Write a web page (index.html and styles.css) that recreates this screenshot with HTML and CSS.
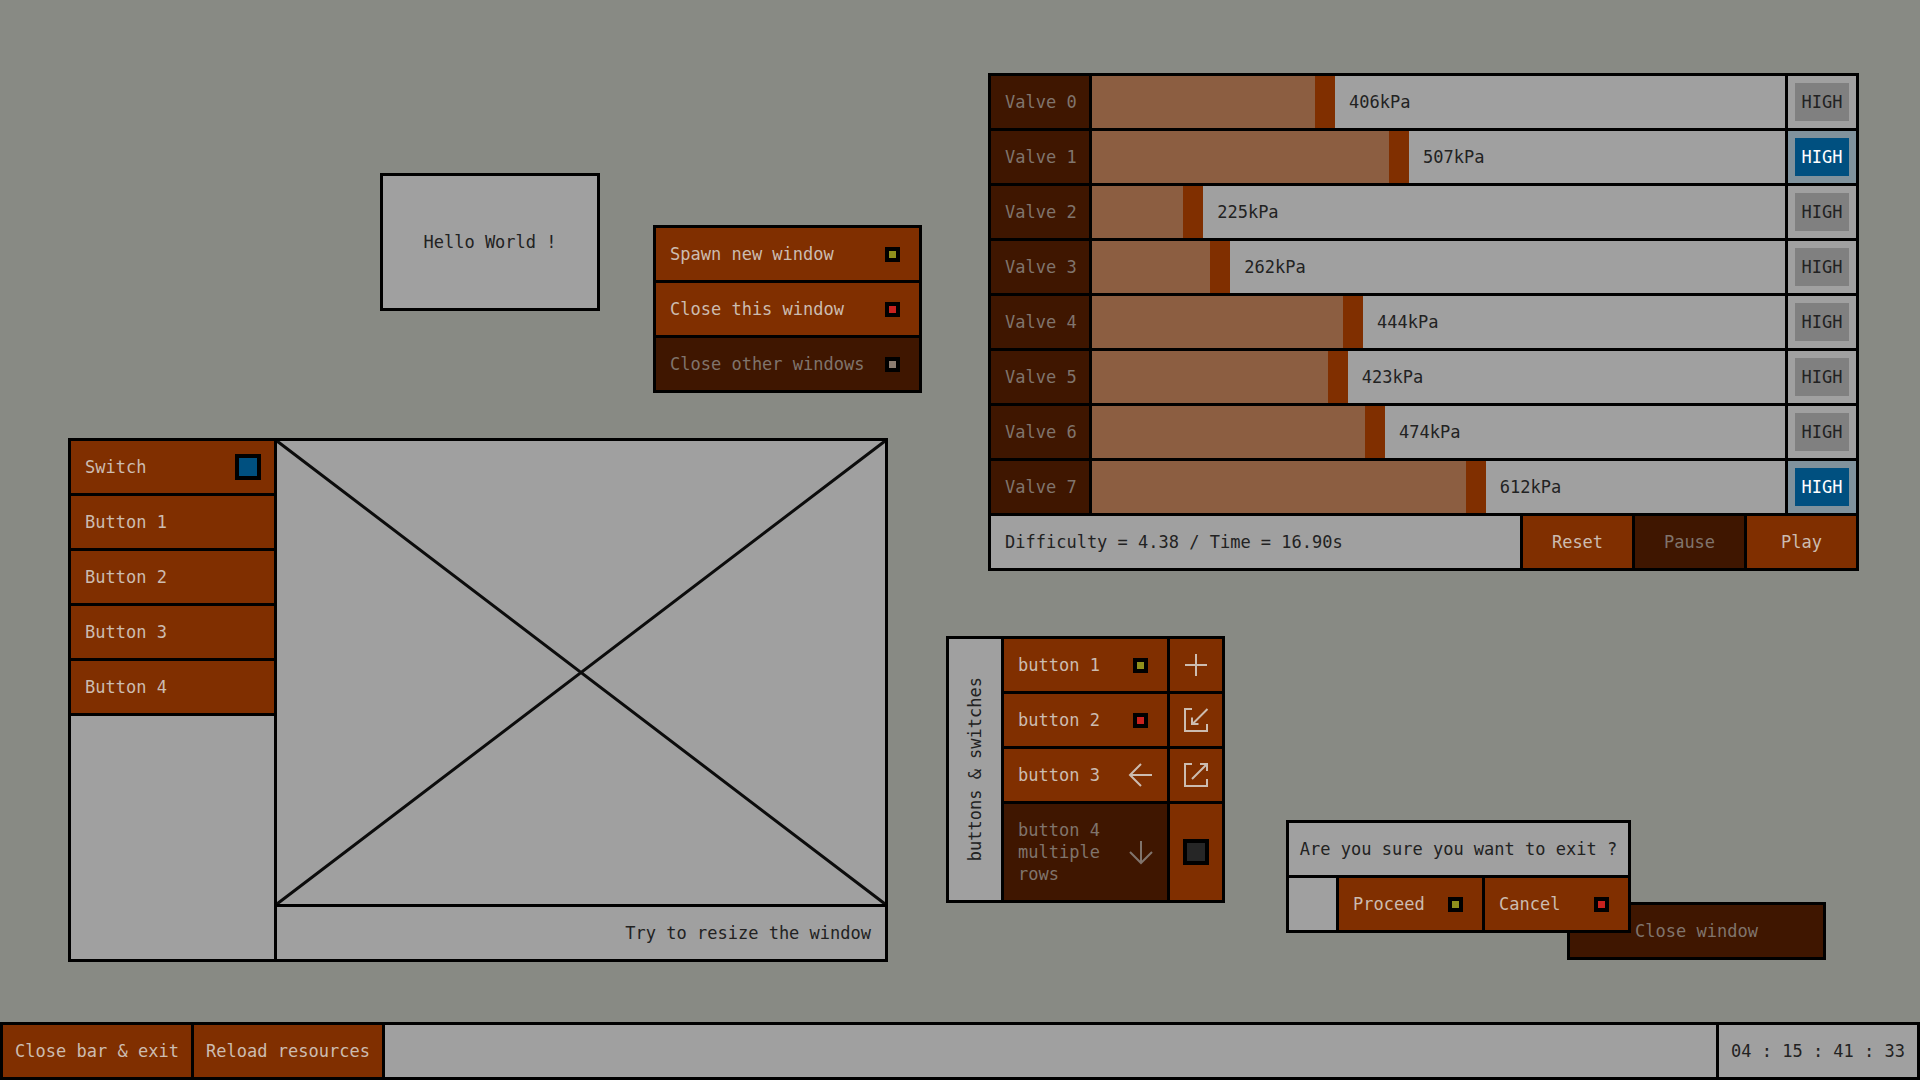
FILE: index.html
```html
<!DOCTYPE html>
<html lang="en">
<head>
<meta charset="utf-8">
<title>Desktop</title>
<link rel="stylesheet" href="styles.css">
</head>
<body>
<main class="desktop">

  <section class="window window-hello">
    <p class="cell cell-center">Hello World !</p>
  </section>

  <section class="window window-menu">
    <button class="cell btn" type="button">Spawn new window<span class="slot"><span class="led led-yellow"></span></span></button>
    <button class="cell btn" type="button">Close this window<span class="slot"><span class="led led-red"></span></span></button>
    <button class="cell btn" type="button" disabled>Close other windows<span class="slot"><span class="led led-off"></span></span></button>
  </section>

  <section class="window window-valves">
    <div class="valve">
      <label class="cell valve-name" for="v0">Valve 0</label>
      <div class="slider" style="--p:0.3315"><input id="v0" type="range" min="100" max="1022" value="406"><output for="v0">406kPa</output></div>
      <div class="cell flag"><button class="high" type="button" aria-pressed="false">HIGH</button></div>
    </div>
    <div class="valve">
      <label class="cell valve-name" for="v1">Valve 1</label>
      <div class="slider" style="--p:0.4414"><input id="v1" type="range" min="100" max="1022" value="507"><output for="v1">507kPa</output></div>
      <div class="cell flag flag-on"><button class="high" type="button" aria-pressed="true">HIGH</button></div>
    </div>
    <div class="valve">
      <label class="cell valve-name" for="v2">Valve 2</label>
      <div class="slider" style="--p:0.1355"><input id="v2" type="range" min="100" max="1022" value="225"><output for="v2">225kPa</output></div>
      <div class="cell flag"><button class="high" type="button" aria-pressed="false">HIGH</button></div>
    </div>
    <div class="valve">
      <label class="cell valve-name" for="v3">Valve 3</label>
      <div class="slider" style="--p:0.1757"><input id="v3" type="range" min="100" max="1022" value="262"><output for="v3">262kPa</output></div>
      <div class="cell flag"><button class="high" type="button" aria-pressed="false">HIGH</button></div>
    </div>
    <div class="valve">
      <label class="cell valve-name" for="v4">Valve 4</label>
      <div class="slider" style="--p:0.3731"><input id="v4" type="range" min="100" max="1022" value="444"><output for="v4">444kPa</output></div>
      <div class="cell flag"><button class="high" type="button" aria-pressed="false">HIGH</button></div>
    </div>
    <div class="valve">
      <label class="cell valve-name" for="v5">Valve 5</label>
      <div class="slider" style="--p:0.3503"><input id="v5" type="range" min="100" max="1022" value="423"><output for="v5">423kPa</output></div>
      <div class="cell flag"><button class="high" type="button" aria-pressed="false">HIGH</button></div>
    </div>
    <div class="valve">
      <label class="cell valve-name" for="v6">Valve 6</label>
      <div class="slider" style="--p:0.4056"><input id="v6" type="range" min="100" max="1022" value="474"><output for="v6">474kPa</output></div>
      <div class="cell flag"><button class="high" type="button" aria-pressed="false">HIGH</button></div>
    </div>
    <div class="valve">
      <label class="cell valve-name" for="v7">Valve 7</label>
      <div class="slider" style="--p:0.5553"><input id="v7" type="range" min="100" max="1022" value="612"><output for="v7">612kPa</output></div>
      <div class="cell flag flag-on"><button class="high" type="button" aria-pressed="true">HIGH</button></div>
    </div>
    <div class="controls">
      <p class="cell">Difficulty = 4.38 / Time = 16.90s</p>
      <button class="cell btn cell-center" type="button">Reset</button>
      <button class="cell btn cell-center" type="button" disabled>Pause</button>
      <button class="cell btn cell-center" type="button">Play</button>
    </div>
  </section>

  <section class="window window-layout">
    <div class="sidebar">
      <label class="cell btn" for="side-switch">Switch<input class="switch" id="side-switch" type="checkbox" checked></label>
      <button class="cell btn" type="button">Button 1</button>
      <button class="cell btn" type="button">Button 2</button>
      <button class="cell btn" type="button">Button 3</button>
      <button class="cell btn" type="button">Button 4</button>
      <div class="filler"></div>
    </div>
    <div class="content">
      <svg class="cross" viewBox="0 0 100 100" preserveAspectRatio="none" aria-hidden="true"><path d="M0 0L100 100M0 100L100 0"/></svg>
      <p class="cell cell-end">Try to resize the window</p>
    </div>
  </section>

  <section class="window window-buttons">
    <h2 class="cell side-title"><span>buttons &amp; switches</span></h2>
    <div class="button-grid">
      <button class="cell btn" type="button">button 1<span class="slot"><span class="led led-yellow"></span></span></button>
      <button class="cell btn icon-only" type="button" aria-label="Add"><svg class="icon" viewBox="0 0 26 26"><path d="M13 2V24M2 13H24"/></svg></button>
      <button class="cell btn" type="button">button 2<span class="slot"><span class="led led-red"></span></span></button>
      <button class="cell btn icon-only" type="button" aria-label="Import"><svg class="icon" viewBox="0 0 26 26"><path d="M9 2H2V24H24V17M24.500 2L9.500 17M9 10.500V17H15.500"/></svg></button>
      <button class="cell btn" type="button">button 3<svg class="icon" viewBox="0 0 26 26"><path d="M24 13H2M13 2L2 13L13 24"/></svg></button>
      <button class="cell btn icon-only" type="button" aria-label="Export"><svg class="icon" viewBox="0 0 26 26"><path d="M9 2H2V24H24V17M9 17L24 2M17 2H24V9"/></svg></button>
      <button class="cell btn" type="button" disabled><span>button 4 multiple rows</span><svg class="icon" viewBox="0 0 26 26"><path d="M13 2V24M2 13L13 24L24 13"/></svg></button>
      <label class="cell btn icon-only"><input class="switch" type="checkbox" aria-label="Switch 4"></label>
    </div>
  </section>

  <section class="window window-close">
    <button class="cell btn cell-center" type="button" disabled>Close window</button>
  </section>

  <section class="window window-exit" role="dialog" aria-label="Exit">
    <p class="cell cell-center">Are you sure you want to exit ?</p>
    <div class="answers">
      <div class="filler"></div>
      <button class="cell btn" type="button">Proceed<span class="slot"><span class="led led-yellow"></span></span></button>
      <button class="cell btn" type="button">Cancel<span class="slot"><span class="led led-red"></span></span></button>
    </div>
  </section>

</main>
<footer class="taskbar">
  <button class="cell btn cell-center" type="button">Close bar &amp; exit</button>
  <button class="cell btn cell-center" type="button">Reload resources</button>
  <div class="filler"></div>
  <time class="cell cell-center">04 : 15 : 41 : 33</time>
</footer>
</body>
</html>
```
FILE: styles.css
```css
:root {
  --line: 3px;
  --row: 52px;
  --black: #000;
  --panel: #a0a0a0;
  --ink: #222;
  --rust: #802f00;
  --rust-text: #ccbcb0;
  --rust-dark: #3f1600;
  --rust-dark-text: #80746c;
  --blue: #005080;
}

* {
  box-sizing: border-box;
  margin: 0;
}

body {
  display: flex;
  flex-direction: column;
  min-height: 100vh;
  background: #888a84;
  color: var(--ink);
  font: 17px/22px "DejaVu Sans Mono", monospace;
}

button,
input {
  font: inherit;
  border: 0;
  border-radius: 0;
}

.desktop {
  position: relative;
  flex: 1;
}

/* Windows: free canvas, black shows through the gaps as separators */
.window {
  position: absolute;
  display: grid;
  gap: var(--line);
  border: var(--line) solid var(--black);
  background: var(--black);
}

.window-hello { left: 380px; top: 173px; width: 220px; height: 138px; }
.window-menu { left: 653px; top: 225px; width: 269px; }
.window-valves { left: 988px; top: 73px; width: 871px; }
.window-layout { left: 68px; top: 438px; width: 820px; height: 524px; grid-template-columns: 203px 1fr; }
.window-buttons { left: 946px; top: 636px; width: 279px; grid-template-columns: var(--row) 1fr; }
.window-close { left: 1567px; top: 902px; width: 259px; }
.window-exit { left: 1286px; top: 820px; width: 345px; }

.cell {
  display: flex;
  align-items: center;
  justify-content: space-between;
  min-height: var(--row);
  padding: 15px 13px 15px 14px;
  background: var(--panel);
  text-align: left;
  white-space: nowrap;
}

.cell-center {
  justify-content: center;
  padding: 15px 0;
}

.cell-end {
  justify-content: flex-end;
  padding-right: 14px;
}

.filler {
  background: var(--panel);
}

.btn {
  background: var(--rust);
  color: var(--rust-text);
}

.btn:disabled,
.valve-name {
  background: var(--rust-dark);
  color: var(--rust-dark-text);
}

/* Indicators */
.slot {
  display: grid;
  place-items: center;
  width: 27px;
}

.led {
  width: 15px;
  height: 15px;
  border: 4px solid var(--black);
}

.led-yellow { background: #90901c; }
.led-red { background: #c8221e; }
.led-off { background: #8c7c70; }

/* Switches and icons are taller than a text line, so they pull in the row padding */
.switch {
  appearance: none;
  width: 26px;
  height: 26px;
  margin: -2px 0;
  border: 4px solid var(--black);
  background: #262626;
}

.switch:checked {
  background: var(--blue);
}

.icon {
  flex: none;
  width: 26px;
  height: 26px;
  margin: -2px 0;
  fill: none;
  stroke: currentColor;
  stroke-width: 2;
}

.icon-only {
  justify-content: center;
  padding: 15px 13px;
}

/* Valves */
.valve {
  display: grid;
  grid-template-columns: 98px 1fr 68px;
  gap: var(--line);
}

.slider {
  display: grid;
  align-items: center;
  background: var(--panel);
}

.slider > * {
  grid-area: 1 / 1;
}

.slider input {
  appearance: none;
  width: 100%;
  height: var(--row);
  background: linear-gradient(#8c5e41, #8c5e41) no-repeat 0 0 / calc((100% - 20px) * var(--p) + 1px) 100%;
}

.slider input::-webkit-slider-thumb {
  appearance: none;
  width: 20px;
  height: var(--row);
  border-radius: 0;
  background: var(--rust);
}

.slider input::-moz-range-thumb {
  width: 20px;
  height: var(--row);
  border: 0;
  border-radius: 0;
  background: var(--rust);
}

.slider output {
  margin-left: calc((100% - 20px) * var(--p) + 34px);
  pointer-events: none;
}

.flag {
  padding: 7px;
}

.flag-on {
  background: #80929c;
}

.high {
  flex: 1;
  height: 38px;
  padding: 0;
  background: #808080;
  color: var(--ink);
}

.high[aria-pressed="true"] {
  background: var(--blue);
  color: #fff;
}

.controls {
  display: grid;
  grid-template-columns: 1fr repeat(3, 109px);
  gap: var(--line);
}

/* Layout demo */
.sidebar {
  display: grid;
  grid-template-rows: repeat(5, auto) 1fr;
  gap: var(--line);
}

.content {
  display: grid;
  grid-template-rows: 1fr auto;
  gap: var(--line);
  min-height: 0;
}

.cross {
  width: 100%;
  height: 100%;
  min-height: 0;
  background: var(--panel);
}

.cross path {
  fill: none;
  stroke: #0c0c0c;
  stroke-width: 3;
  vector-effect: non-scaling-stroke;
}

/* Buttons and switches */
.side-title {
  justify-content: center;
  padding: 0;
  font: inherit;
}

.side-title span {
  writing-mode: vertical-rl;
  transform: rotate(180deg);
}

.button-grid {
  display: grid;
  grid-template-columns: 1fr var(--row);
  gap: var(--line);
}

.button-grid .btn {
  white-space: normal;
}

/* Exit dialog */
.answers {
  display: grid;
  grid-template-columns: 1fr 143px 143px;
  gap: var(--line);
}

/* Bottom bar */
.taskbar {
  display: grid;
  grid-template-columns: 188px 188px 1fr 198px;
  gap: var(--line);
  border: var(--line) solid var(--black);
  background: var(--black);
}
```
